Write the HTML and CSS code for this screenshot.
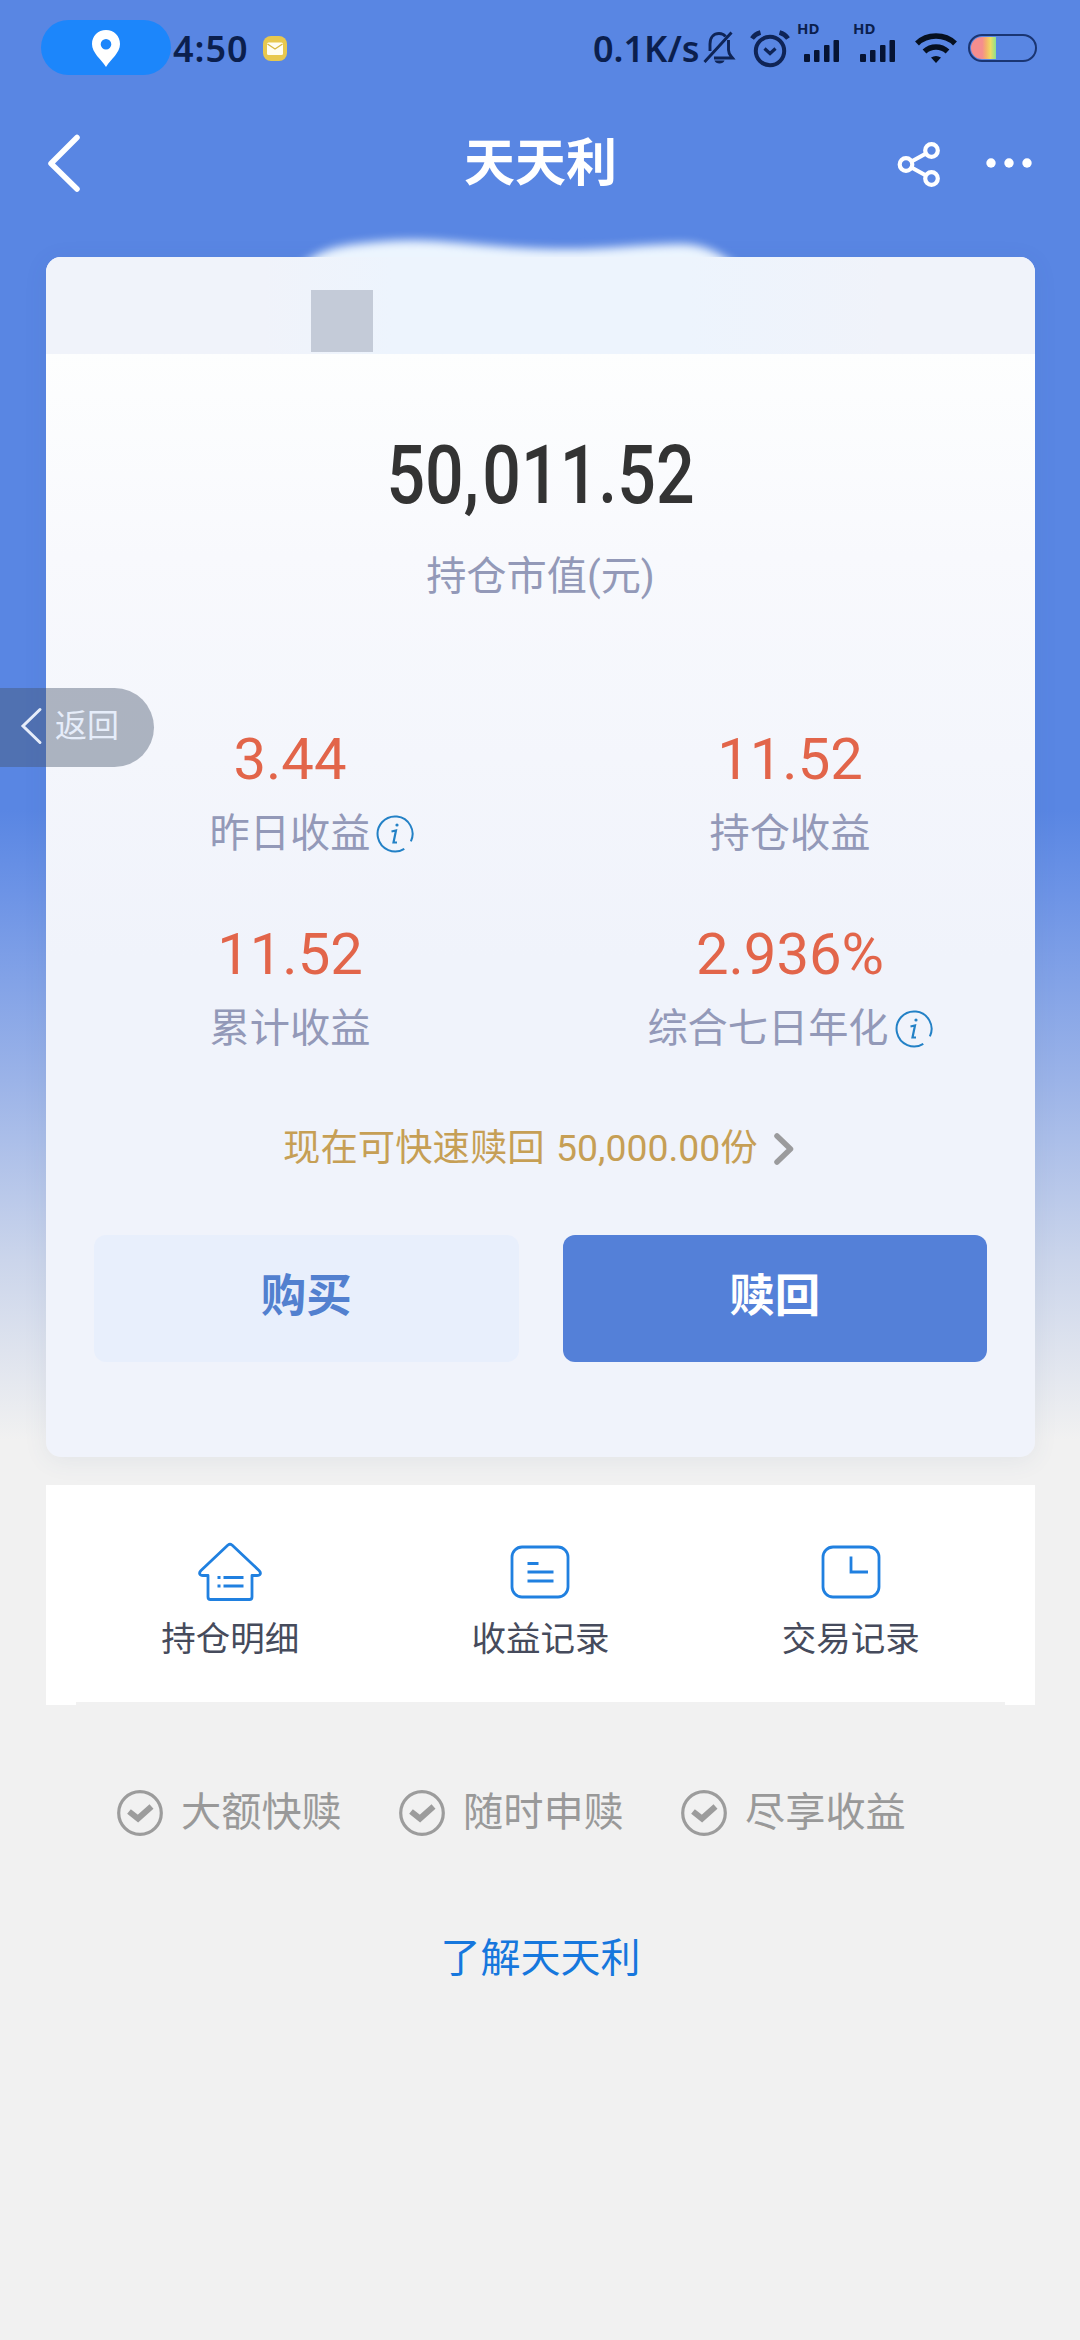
FILE: index.html
```html
<!DOCTYPE html>
<html lang="zh-CN">
<head>
<meta charset="utf-8">
<title>天天利</title>
<link rel="stylesheet" href="styles.css">
</head>
<body>
<div class="screen">
  <header class="status">
    <div class="status-left">
      <span class="loc-pill"><svg width="28" height="37" viewBox="0 0 28 37"><path fill="#fff" fill-rule="evenodd" d="M14 0C6 0 0 6 0 14c0 9 9 15 14 23 5-8 14-14 14-23C28 6 22 0 14 0Zm0 9a5.3 5.3 0 1 1 0 10.600a5.300 5.300 0 0 1 0-10.600Z"/></svg></span>
      <span class="clock">4:50</span>
      <svg class="mail" width="24" height="25" viewBox="0 0 24 25"><rect width="24" height="25" rx="8" fill="#e8c84e"/><rect x="4" y="6.500" width="16" height="12.500" rx="1.500" fill="#fffdf0"/><path d="M4.500 8l7.500 5 7.500-5" fill="none" stroke="#d9b840" stroke-width="1.300"/></svg>
    </div>
    <div class="status-right">
      <span class="speed">0.1K/s</span>
      <svg class="bell" width="34" height="34" viewBox="0 0 34 34" fill="none" stroke="#0f2456" stroke-width="2.900"><path d="M7 20V13C7 6 11 2.500 16 2.500c3 0 5 1 6.500 3M25.500 9V19c0 4 1.500 5 4 8H11M1.500 31 28.500 1.500"/><path d="M11.500 29.500c1 4 9 4 10 0Z" fill="#0f2456" stroke="none"/></svg>
      <svg class="alarm" width="40" height="38" viewBox="0 0 40 38" fill="none" stroke="#0f2456"><circle cx="20" cy="21" r="14.200" stroke-width="4"/><path d="M2 8.500Q5 4 10.500 2.500M38 8.500Q35 4 29.500 2.500" stroke-width="4.500"/><path d="m14.500 18.500 5.500 5 5.500-5" stroke-width="3.200"/></svg>
      <span class="signal"><b class="hd">HD</b><svg width="36" height="22" viewBox="0 0 36 22" fill="#061434"><rect y="14" width="6" height="8" rx="1"/><rect x="10" y="10" width="5.500" height="12" rx="1"/><rect x="20" y="5" width="5.500" height="17" rx="1"/><rect x="29.500" width="5.500" height="22" rx="1"/></svg></span>
      <span class="signal"><b class="hd">HD</b><svg width="36" height="22" viewBox="0 0 36 22" fill="#061434"><rect y="14" width="6" height="8" rx="1"/><rect x="10" y="10" width="5.500" height="12" rx="1"/><rect x="20" y="5" width="5.500" height="17" rx="1"/><rect x="29.500" width="5.500" height="22" rx="1"/></svg></span>
      <svg class="wifi" width="42" height="30" viewBox="0 0 42 30" fill="none" stroke="#061020" stroke-width="5.500"><path d="M2 10.500C12 .5 30 .5 40 10.500M9.500 18.500c6.500-6 16.500-6 23 0"/><path d="M16 24.500q5-3 10 0l-5 5.500Z" fill="#061020" stroke="none"/></svg>
      <span class="battery"><span class="charge"></span></span>
    </div>
  </header>

  <nav class="titlebar">
    <svg class="back" width="34" height="60" viewBox="0 0 34 60"><path d="M31 4.500 5 30.500 31 56" fill="none" stroke="#fff" stroke-width="5.500" stroke-linecap="round" stroke-linejoin="round"/></svg>
    <h1 class="title">天天利</h1>
    <svg class="share" width="44" height="46" viewBox="0 0 44 46" fill="none" stroke="#fff" stroke-width="4.200"><circle cx="9" cy="22.500" r="6.300"/><circle cx="34.500" cy="8.500" r="6.300"/><circle cx="34.500" cy="36.500" r="6.300"/><path d="m14.500 19.500 14.500-8M14.500 25.500l14.500 8"/></svg>
    <svg class="more" width="46" height="10" viewBox="0 0 46 10" fill="#fff"><circle cx="5" cy="5" r="4.700"/><circle cx="23" cy="5" r="4.700"/><circle cx="41" cy="5" r="4.700"/></svg>
  </nav>

  <main class="content">
    <section class="card">
      <svg class="smudge" width="500" height="50" viewBox="0 0 500 50"><path d="M12 58C35 36 50 27 90 24C150 17 180 25 250 29C320 33 370 24 410 25C435 27 450 38 475 58Z" fill="#ecf5fe"/></svg>
      <div class="card-head"><span class="block"></span></div>
      <div class="total">50<span class="comma">,</span>011.52</div>
      <div class="total-label">持仓市值(元)</div>
      <div class="stats">
        <div class="stat">
          <div class="value">3.44</div>
          <div class="label">昨日收益<svg class="info hang" width="38" height="38" viewBox="0 0 38 38"><path d="M28.300 33.800A17.500 17.500 0 1 1 34.900 26.400" fill="none" stroke="#2381c6" stroke-width="2"/><path d="m15.500 16.500 4.500-1-2.500 12h3.500" fill="none" stroke="#2381c6" stroke-width="2.200"/><circle cx="21" cy="10" r="1.600" fill="#2381c6"/></svg></div>
        </div>
        <div class="stat">
          <div class="value">11.52</div>
          <div class="label">持仓收益</div>
        </div>
        <div class="stat">
          <div class="value">11.52</div>
          <div class="label">累计收益</div>
        </div>
        <div class="stat">
          <div class="value">2.936%</div>
          <div class="label">综合七日年化<svg class="info" width="38" height="38" viewBox="0 0 38 38"><path d="M28.300 33.800A17.500 17.500 0 1 1 34.900 26.400" fill="none" stroke="#2381c6" stroke-width="2"/><path d="m15.500 16.500 4.500-1-2.500 12h3.500" fill="none" stroke="#2381c6" stroke-width="2.200"/><circle cx="21" cy="10" r="1.600" fill="#2381c6"/></svg></div>
        </div>
      </div>
      <div class="redeem-line">现在可快速赎回 50,000.00份<svg width="22" height="34" viewBox="0 0 22 34"><path d="m4 4 13.500 13L4 30" fill="none" stroke="#9b9b9d" stroke-width="5.500" stroke-linecap="round" stroke-linejoin="round"/></svg></div>
      <div class="buttons">
        <button class="btn buy">购买</button>
        <button class="btn redeem">赎回</button>
      </div>
    </section>

    <section class="actions">
      <div class="action">
        <svg width="66" height="60" viewBox="0 0 66 60" fill="none" stroke="#2080e0" stroke-width="2.800" stroke-linejoin="round"><path d="M31 4q2-1.500 4 0L62 29.500c2.500 2.500 1.500 5-2 5H55v21.500q0 2.500-2.500 2.500h-39Q11 58.500 11 56V34.500H6C2.500 34.500 1.500 32 4 29.500Z"/><path d="M26.500 36.500h20M26.500 45h20M20.500 36.500h3M20.500 45h3"/></svg>
        <span>持仓明细</span>
      </div>
      <div class="action">
        <svg width="66" height="60" viewBox="0 0 66 60" fill="none" stroke="#2080e0" stroke-width="2.800"><rect x="5" y="6" width="56" height="50" rx="10"/><path d="M20.500 22.500h11M20.500 31h26M20.500 40h26"/></svg>
        <span>收益记录</span>
      </div>
      <div class="action">
        <svg width="66" height="60" viewBox="0 0 66 60" fill="none" stroke="#2080e0" stroke-width="2.800"><rect x="5" y="6" width="56" height="50" rx="10"/><path d="M33 15.500V31h17"/></svg>
        <span>交易记录</span>
      </div>
    </section>

    <ul class="features">
      <li><svg width="48" height="48" viewBox="0 0 48 48" fill="none" stroke="#9c9c9c"><circle cx="24" cy="24" r="21.300" stroke-width="3.200"/><path d="m13 22.500 9 7 13.500-12" stroke-width="6"/></svg>大额快赎</li>
      <li><svg width="48" height="48" viewBox="0 0 48 48" fill="none" stroke="#9c9c9c"><circle cx="24" cy="24" r="21.300" stroke-width="3.200"/><path d="m13 22.500 9 7 13.500-12" stroke-width="6"/></svg>随时申赎</li>
      <li><svg width="48" height="48" viewBox="0 0 48 48" fill="none" stroke="#9c9c9c"><circle cx="24" cy="24" r="21.300" stroke-width="3.200"/><path d="m13 22.500 9 7 13.500-12" stroke-width="6"/></svg>尽享收益</li>
    </ul>
    <a class="learn">了解天天利</a>
  </main>

  <div class="float-back"><svg width="24" height="40" viewBox="0 0 24 40"><path d="M20 3.500 3 20l17 16.500" fill="none" stroke="#e6edfa" stroke-width="3" stroke-linecap="round"/></svg>返回</div>
</div>
</body>
</html>
```
FILE: styles.css
```css
* { box-sizing: border-box; margin: 0; padding: 0; }
body { font-family: Roboto, "Noto Sans CJK SC", sans-serif; }
svg { display: block; flex: none; }
.screen {
  position: relative;
  width: 1080px;
  height: 2340px;
  overflow: hidden;
  background: linear-gradient(#5986e3 0, #5986e3 810px, #6c93e6 890px, #9bb3e8 1080px, #cbd5eb 1260px, #f1f1f1 1440px);
}

/* status bar */
.status { height: 95px; display: flex; justify-content: space-between; align-items: flex-start; padding: 20px 43px 0 41px; color: #0b1f4e; }
.status-left, .status-right { display: flex; align-items: flex-start; }
.loc-pill { width: 130px; height: 55px; border-radius: 28px; background: #1c86fb; display: flex; justify-content: center; padding-top: 10px; }
.clock, .speed { font: 600 36px/44px "Noto Sans", sans-serif; white-space: nowrap; margin-top: 7px; }
.clock { width: 79px; margin-left: 2px; letter-spacing: 1px; }
.mail { margin: 16px 0 0 11px; }
.speed { width: 108px; }
.bell { margin: 11px 0 0 2px; }
.alarm { margin: 10px 0 0 13px; }
.signal { width: 43px; margin: 1px 0 0 7px; display: flex; flex-direction: column; }
.signal + .signal { margin-left: 13px; }
.signal svg { margin: 6px 0 0 7px; }
.hd { font: 700 15px/15px "Noto Sans", sans-serif; height: 13px; }
.wifi { margin: 13px 0 0 19px; }
.battery { width: 69px; height: 28px; margin: 14px 0 0 11px; border: 2px solid #1a3572; border-radius: 14px; overflow: hidden; padding: 1px; }
.charge { display: block; width: 25px; height: 22px; border-radius: 11px 0 0 11px; background: linear-gradient(90deg, #f58e8e 45%, #f4b06c 60%, #eedb62 78%, #8de08c); }

/* title bar */
.titlebar { height: 162px; display: flex; align-items: flex-start; padding-left: 46px; color: #fff; }
.back { margin-top: 38px; }
.title { font-size: 51px; line-height: 74px; font-weight: 700; margin: 32px 0 0 384px; width: 154px; white-space: nowrap; }
.share { margin: 47px 0 0 279px; }
.more { margin: 63px 0 0 45px; }

/* holdings card */
.content { padding: 0 45px 0 46px; }
.card {
  position: relative;
  height: 1200px;
  border-radius: 15px;
  background: linear-gradient(#fdfefe 96px, #f8f9fd 300px, #f0f3fb 700px, #f0f3fb);
  box-shadow: 0 4px 24px rgba(70, 90, 130, .08);
}
.smudge { position: absolute; left: 230px; top: -38px; filter: blur(5px); }
.card-head { position: relative; height: 97px; border-radius: 15px 15px 0 0; background: linear-gradient(90deg, #f0f3fa 22%, #edf4fd 35%, #edf4fd 65%, #f0f3fa 85%); padding: 33px 0 0 265px; }
.block { display: block; width: 62px; height: 62px; background: #c4cbd8; }
.total { font-size: 81px; line-height: 96px; font-weight: 500; color: #333; text-align: center; margin-top: 74px; transform: scaleX(.84); white-space: nowrap; }
.comma { letter-spacing: 4px; }
.total-label { font-size: 40.200px; line-height: 58px; text-align: center; color: #9399b8; margin: 24px 0 0 0; }
.stats { display: grid; grid-template-columns: 500px 500px; grid-auto-rows: 195px; margin: 119px 0 0 -6px; }
.stat { display: flex; flex-direction: column; align-items: center; }
.value { font-size: 58px; line-height: 68px; color: #e2654a; }
.label { display: flex; align-items: center; font-size: 40.200px; line-height: 58px; color: #9399b8; margin-top: 12px; }
.info { margin-left: 6px; }
.hang { margin-right: -44px; }
.redeem-line { display: flex; align-items: center; font-size: 37.400px; line-height: 54px; color: #c69f55; margin: 6px 0 0 237px; white-space: nowrap; word-spacing: 2px; }
.redeem-line svg { margin: 2px 0 0 15px; }
.buttons { display: flex; gap: 44px; padding: 0 48px; margin-top: 60px; }
.btn { flex: 1; height: 127px; border: 0; border-radius: 12px; font: 700 45.500px/66px Roboto, "Noto Sans CJK SC", sans-serif; padding-bottom: 3px; }
.buy { background: #e8effc; color: #5280cf; }
.redeem { background: #5480d8; color: #fff; }

/* shortcuts */
.actions { height: 217px; margin-top: 28px; background: #fff; display: flex; padding: 56px 29px 0 29px; position: relative; }
.actions::before, .actions::after { content: ""; position: absolute; top: 217px; width: 30px; height: 3px; background: #fff; }
.actions::before { left: 0; }
.actions::after { right: 0; }
.action { flex: 1; display: flex; flex-direction: column; align-items: center; gap: 13px; font-size: 34.500px; line-height: 50px; color: #464b5c; }

.features { list-style: none; display: flex; padding: 82px 0 0 70px; }
.features li { width: 282px; display: flex; align-items: center; gap: 17px; font-size: 40.200px; line-height: 58px; color: #999; }
.learn { display: block; text-align: center; font-size: 40px; line-height: 58px; color: #1677dd; margin-top: 88px; }

/* floating return tab */
.float-back { position: absolute; left: 0; top: 688px; width: 154px; height: 79px; border-radius: 0 40px 40px 0; background: rgba(68, 82, 107, .41); display: flex; align-items: center; gap: 11px; padding: 0 0 4px 20px; color: #e6edfa; font-size: 32px; line-height: 46px; white-space: nowrap; }
```
